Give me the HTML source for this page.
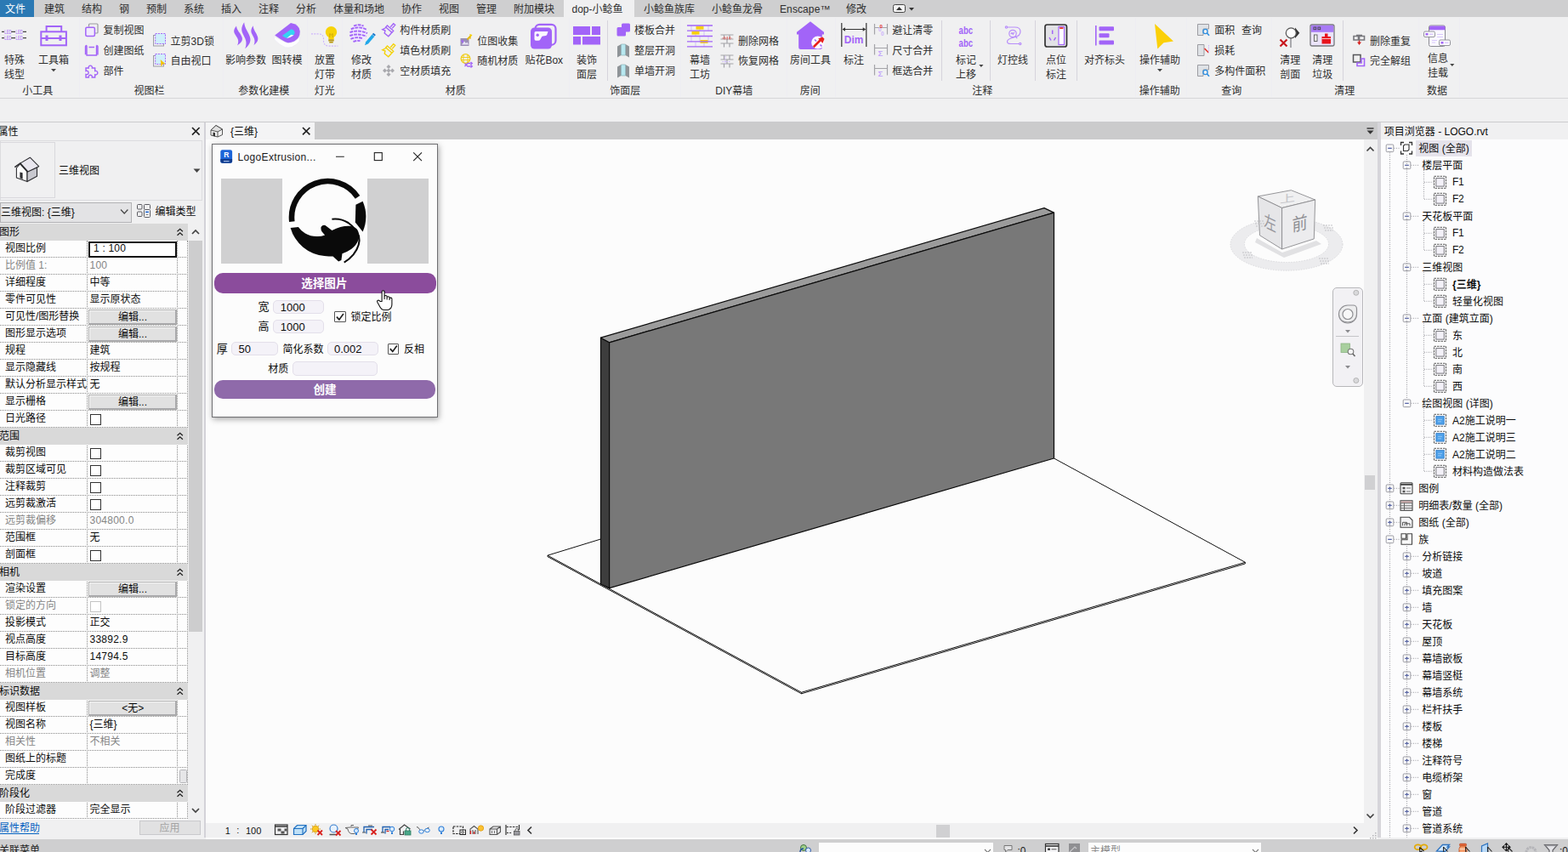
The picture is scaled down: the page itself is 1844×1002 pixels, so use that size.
<!DOCTYPE html>
<html lang="zh-CN"><head><meta charset="utf-8"><title>Revit - LOGO.rvt</title>
<style>
html,body{margin:0;padding:0}
body{width:1844px;height:1002px;overflow:hidden;position:relative;background:#fcfcfc;font-family:"Liberation Sans",sans-serif;font-size:12px;color:#333}
#app{position:absolute;left:0;top:0;width:1844px;height:1002px;overflow:hidden}
#app div,#app span{position:absolute;box-sizing:border-box}
.t{white-space:nowrap}
#ov{position:absolute;left:0;top:0}
</style></head>
<body>
<div id="app">
<div style="left:0px;top:0px;width:1844px;height:20px;background:#cfcfd0;"></div>
<div style="left:0px;top:0px;width:40px;height:19.5px;background:#2b79b4;"></div>
<div style="left:663px;top:0px;width:83px;height:20px;background:#f0f0f1;"></div>
<span class="t" style="top:2.9px;font-size:12px;line-height:16px;color:#2e2e2e;letter-spacing:0.1px;left:917px;">Enscape™</span>
<div style="left:0px;top:20px;width:1844px;height:95.5px;background:#f0f0f1;"></div>
<div style="left:0px;top:115px;width:1844px;height:1px;background:#d6d6d8;"></div>
<div style="left:0px;top:116px;width:1844px;height:26.5px;background:#f0f0f1;"></div>
<div style="left:0px;top:142.5px;width:1844px;height:1.5px;background:#cbcbcd;"></div>
<div style="left:713.7px;top:24px;width:1px;height:71px;background:#d6d4dc;"></div>
<div style="left:1107.1px;top:24px;width:1px;height:71px;background:#d6d4dc;"></div>
<div style="left:1164.2px;top:24px;width:1px;height:71px;background:#d6d4dc;"></div>
<div style="left:1217.2px;top:24px;width:1px;height:71px;background:#d6d4dc;"></div>
<div style="left:1265.9px;top:24px;width:1px;height:71px;background:#d6d4dc;"></div>
<div style="left:1579.1px;top:24px;width:1px;height:71px;background:#d6d4dc;"></div>
<div style="left:93px;top:21px;width:1px;height:93px;background:#eeedf2;"></div>
<div style="left:262px;top:21px;width:1px;height:93px;background:#eeedf2;"></div>
<div style="left:361px;top:21px;width:1px;height:93px;background:#eeedf2;"></div>
<div style="left:402px;top:21px;width:1px;height:93px;background:#eeedf2;"></div>
<div style="left:669px;top:21px;width:1px;height:93px;background:#eeedf2;"></div>
<div style="left:800px;top:21px;width:1px;height:93px;background:#eeedf2;"></div>
<div style="left:925px;top:21px;width:1px;height:93px;background:#eeedf2;"></div>
<div style="left:982px;top:21px;width:1px;height:93px;background:#eeedf2;"></div>
<div style="left:1335px;top:21px;width:1px;height:93px;background:#eeedf2;"></div>
<div style="left:1395px;top:21px;width:1px;height:93px;background:#eeedf2;"></div>
<div style="left:1495px;top:21px;width:1px;height:93px;background:#eeedf2;"></div>
<div style="left:1668px;top:21px;width:1px;height:93px;background:#eeedf2;"></div>
<div style="left:1716px;top:21px;width:1px;height:93px;background:#eeedf2;"></div>
<div style="left:0px;top:143.5px;width:239.5px;height:842px;background:#f0f0f1;"></div>
<div style="left:239.5px;top:143.5px;width:2.5px;height:842px;background:#d3d2d8;"></div>
<div style="left:0px;top:164.5px;width:238px;height:71px;background:#f0f0f1;border:1px solid #dcdcdf;"></div>
<div style="left:0px;top:167px;width:65px;height:65.5px;border:1px solid #d9d8dd;border-left:none;"></div>
<div style="left:0px;top:237.5px;width:154.5px;height:24px;background:#e3e3e5;border:1px solid #b2b2b5;"></div>
<div style="left:0px;top:263px;width:220.5px;height:700.5px;background:#fdfdfd;"></div>
<div style="left:102px;top:283px;width:1px;height:680px;border-left:1px dotted #8a8a8a;"></div>
<div style="left:208px;top:283px;width:1px;height:680px;border-left:1px dotted #8a8a8a;"></div>
<div style="left:220px;top:283px;width:1px;height:680px;border-left:1px dotted #8a8a8a;"></div>
<div style="left:0px;top:263px;width:220.5px;height:20px;background:#d9d9d9;"></div>
<div style="left:0px;top:283px;width:220.5px;height:20px;border-bottom:1px dotted #8a8a8a;"></div>
<div style="left:103.5px;top:283.5px;width:104.5px;height:19px;background:#fff;border:2px solid #111;"></div>
<span class="t" style="top:284.2px;font-size:12px;line-height:16px;color:#0c0c0c;letter-spacing:0.2px;left:110px;">1 : 100</span>
<div style="left:0px;top:303px;width:220.5px;height:20px;border-bottom:1px dotted #8a8a8a;"></div>
<span class="t" style="top:304.2px;font-size:12px;line-height:16px;color:#858585;letter-spacing:0.25px;left:105.5px;">100</span>
<div style="left:0px;top:323px;width:220.5px;height:20px;border-bottom:1px dotted #8a8a8a;"></div>
<div style="left:0px;top:343px;width:220.5px;height:20px;border-bottom:1px dotted #8a8a8a;"></div>
<div style="left:0px;top:363px;width:220.5px;height:20px;border-bottom:1px dotted #8a8a8a;"></div>
<div style="left:104px;top:364px;width:104px;height:18px;background:#e1e1e1;border:1px solid #adadad;box-shadow:inset -1px -1px 0 #a8a8ab, inset 1px 1px 0 #f6f6f6;"></div>
<div style="left:0px;top:383px;width:220.5px;height:20px;border-bottom:1px dotted #8a8a8a;"></div>
<div style="left:104px;top:384px;width:104px;height:18px;background:#e1e1e1;border:1px solid #adadad;box-shadow:inset -1px -1px 0 #a8a8ab, inset 1px 1px 0 #f6f6f6;"></div>
<div style="left:0px;top:403px;width:220.5px;height:20px;border-bottom:1px dotted #8a8a8a;"></div>
<div style="left:0px;top:423px;width:220.5px;height:20px;border-bottom:1px dotted #8a8a8a;"></div>
<div style="left:0px;top:443px;width:220.5px;height:20px;border-bottom:1px dotted #8a8a8a;"></div>
<div style="left:0px;top:463px;width:220.5px;height:20px;border-bottom:1px dotted #8a8a8a;"></div>
<div style="left:104px;top:464px;width:104px;height:18px;background:#e1e1e1;border:1px solid #adadad;box-shadow:inset -1px -1px 0 #a8a8ab, inset 1px 1px 0 #f6f6f6;"></div>
<div style="left:0px;top:483px;width:220.5px;height:20px;border-bottom:1px dotted #8a8a8a;"></div>
<div style="left:106px;top:486.5px;width:13px;height:13px;background:#fff;border:1px solid #333;"></div>
<div style="left:0px;top:503px;width:220.5px;height:20px;background:#d9d9d9;"></div>
<div style="left:0px;top:523px;width:220.5px;height:20px;border-bottom:1px dotted #8a8a8a;"></div>
<div style="left:106px;top:526.5px;width:13px;height:13px;background:#fff;border:1px solid #333;"></div>
<div style="left:0px;top:543px;width:220.5px;height:20px;border-bottom:1px dotted #8a8a8a;"></div>
<div style="left:106px;top:546.5px;width:13px;height:13px;background:#fff;border:1px solid #333;"></div>
<div style="left:0px;top:563px;width:220.5px;height:20px;border-bottom:1px dotted #8a8a8a;"></div>
<div style="left:106px;top:566.5px;width:13px;height:13px;background:#fff;border:1px solid #333;"></div>
<div style="left:0px;top:583px;width:220.5px;height:20px;border-bottom:1px dotted #8a8a8a;"></div>
<div style="left:106px;top:586.5px;width:13px;height:13px;background:#fff;border:1px solid #333;"></div>
<div style="left:0px;top:603px;width:220.5px;height:20px;border-bottom:1px dotted #8a8a8a;"></div>
<span class="t" style="top:604.2px;font-size:12px;line-height:16px;color:#858585;letter-spacing:0.25px;left:105.5px;">304800.0</span>
<div style="left:0px;top:623px;width:220.5px;height:20px;border-bottom:1px dotted #8a8a8a;"></div>
<div style="left:0px;top:643px;width:220.5px;height:20px;border-bottom:1px dotted #8a8a8a;"></div>
<div style="left:106px;top:646.5px;width:13px;height:13px;background:#fff;border:1px solid #333;"></div>
<div style="left:0px;top:663px;width:220.5px;height:20px;background:#d9d9d9;"></div>
<div style="left:0px;top:683px;width:220.5px;height:20px;border-bottom:1px dotted #8a8a8a;"></div>
<div style="left:104px;top:684px;width:104px;height:18px;background:#e1e1e1;border:1px solid #adadad;box-shadow:inset -1px -1px 0 #a8a8ab, inset 1px 1px 0 #f6f6f6;"></div>
<div style="left:0px;top:703px;width:220.5px;height:20px;border-bottom:1px dotted #8a8a8a;"></div>
<div style="left:106px;top:706.5px;width:13px;height:13px;background:#fff;border:1px solid #c4c4c4;"></div>
<div style="left:0px;top:723px;width:220.5px;height:20px;border-bottom:1px dotted #8a8a8a;"></div>
<div style="left:0px;top:743px;width:220.5px;height:20px;border-bottom:1px dotted #8a8a8a;"></div>
<span class="t" style="top:744.2px;font-size:12px;line-height:16px;color:#0c0c0c;letter-spacing:0.25px;left:105.5px;">33892.9</span>
<div style="left:0px;top:763px;width:220.5px;height:20px;border-bottom:1px dotted #8a8a8a;"></div>
<span class="t" style="top:764.2px;font-size:12px;line-height:16px;color:#0c0c0c;letter-spacing:0.25px;left:105.5px;">14794.5</span>
<div style="left:0px;top:783px;width:220.5px;height:20px;border-bottom:1px dotted #8a8a8a;"></div>
<div style="left:0px;top:803px;width:220.5px;height:20px;background:#d9d9d9;"></div>
<div style="left:0px;top:823px;width:220.5px;height:20px;border-bottom:1px dotted #8a8a8a;"></div>
<div style="left:104px;top:824px;width:104px;height:18px;background:#e1e1e1;border:1px solid #adadad;box-shadow:inset -1px -1px 0 #a8a8ab, inset 1px 1px 0 #f6f6f6;"></div>
<div style="left:0px;top:843px;width:220.5px;height:20px;border-bottom:1px dotted #8a8a8a;"></div>
<div style="left:0px;top:863px;width:220.5px;height:20px;border-bottom:1px dotted #8a8a8a;"></div>
<div style="left:0px;top:883px;width:220.5px;height:20px;border-bottom:1px dotted #8a8a8a;"></div>
<div style="left:0px;top:903px;width:220.5px;height:20px;border-bottom:1px dotted #8a8a8a;"></div>
<div style="left:0px;top:923px;width:220.5px;height:20px;background:#d9d9d9;"></div>
<div style="left:0px;top:943px;width:220.5px;height:20px;border-bottom:1px dotted #8a8a8a;"></div>
<div style="left:210.5px;top:905px;width:9.5px;height:16px;background:#e6e6e8;border:1px solid #b5b5b8;border-radius:1.5px;"></div>
<div style="left:222px;top:263px;width:15.5px;height:700px;background:#f0f0f1;"></div>
<div style="left:222px;top:283px;width:15.5px;height:460px;background:#cdcdce;"></div>
<div style="left:0px;top:980px;width:46px;height:1px;background:#0563c1;"></div>
<div style="left:163.5px;top:964.5px;width:72px;height:17.5px;background:#e1e1e2;border:1px solid #c9c9cc;"></div>
<div style="left:242px;top:143.5px;width:1382px;height:20.5px;background:#cbcbcc;"></div>
<div style="left:242.3px;top:143.5px;width:127.5px;height:20.5px;background:#f4f4f5;"></div>
<div style="left:242px;top:164px;width:1362px;height:804px;background:#fcfcfc;"></div>
<div style="left:1604px;top:164px;width:16px;height:804px;background:#f0f0f1;"></div>
<div style="left:1605px;top:559px;width:12px;height:17px;background:#d0d0d2;"></div>
<div style="left:1620px;top:143.5px;width:4.3px;height:842px;background:#d6d5da;"></div>
<div style="left:249px;top:169px;width:266px;height:322px;background:#fcfcfc;border:1px solid #6f6f72;box-shadow:1px 2px 7px rgba(0,0,0,.35);"></div>
<span class="t" style="top:177.4px;font-size:12px;line-height:16px;color:#1a1a1a;letter-spacing:0.33px;left:279.6px;">LogoExtrusion...</span>
<div style="left:260.2px;top:210.2px;width:72px;height:99.6px;background:#d0d0d1;"></div>
<div style="left:432px;top:210.2px;width:72px;height:99.6px;background:#d0d0d1;"></div>
<div style="left:251.5px;top:321.2px;width:261.5px;height:23.7px;background:#8b4c9c;border-radius:10px;"></div>
<div style="left:252px;top:447.3px;width:260px;height:21.5px;background:#8f6aaa;border-radius:10px;"></div>
<div style="left:321.2px;top:352.6px;width:59.7px;height:16.4px;background:#f4f2f8;border:1px solid #e3dfea;border-radius:5px;"></div>
<span class="t" style="top:352.7px;font-size:13px;line-height:17px;color:#0c0c0c;left:329.8px;">1000</span>
<div style="left:321.2px;top:375.6px;width:59.7px;height:16.4px;background:#f4f2f8;border:1px solid #e3dfea;border-radius:5px;"></div>
<span class="t" style="top:375.7px;font-size:13px;line-height:17px;color:#0c0c0c;left:329.8px;">1000</span>
<div style="left:272.4px;top:401.8px;width:54.2px;height:16.6px;background:#f4f2f8;border:1px solid #e3dfea;border-radius:5px;"></div>
<span class="t" style="top:402.4px;font-size:13px;line-height:17px;color:#0c0c0c;left:280.5px;">50</span>
<div style="left:385.3px;top:401.8px;width:59.3px;height:16.6px;background:#f4f2f8;border:1px solid #e3dfea;border-radius:5px;"></div>
<span class="t" style="top:402.4px;font-size:13px;line-height:17px;color:#0c0c0c;left:393px;">0.002</span>
<div style="left:344.2px;top:425.4px;width:99.7px;height:16.5px;background:#f4f2f8;border:1px solid #e3dfea;border-radius:5px;"></div>
<div style="left:393.3px;top:366.3px;width:13.3px;height:12.8px;background:#fff;border:1px solid #555;border-radius:1px;"></div>
<div style="left:456.2px;top:403.8px;width:13.3px;height:12.8px;background:#fff;border:1px solid #555;border-radius:1px;"></div>
<div style="left:1567px;top:338px;width:35.5px;height:117px;background:#f2f1f4;border:1.500px solid #b7b7ba;border-radius:5px;"></div>
<div style="left:1624.3px;top:143.5px;width:220px;height:842px;background:#fcfcfd;"></div>
<div style="left:1624.3px;top:144px;width:220px;height:20px;background:#f0f0f1;"></div>
<div style="left:1665px;top:164.5px;width:65.5px;height:19.5px;background:#e5e3eb;"></div>
<span class="t" style="top:206.3px;font-size:12px;line-height:16px;color:#0c0c0c;letter-spacing:-0.3px;left:1708px;">F1</span>
<span class="t" style="top:226.3px;font-size:12px;line-height:16px;color:#0c0c0c;letter-spacing:-0.3px;left:1708px;">F2</span>
<span class="t" style="top:266.3px;font-size:12px;line-height:16px;color:#0c0c0c;letter-spacing:-0.3px;left:1708px;">F1</span>
<span class="t" style="top:286.3px;font-size:12px;line-height:16px;color:#0c0c0c;letter-spacing:-0.3px;left:1708px;">F2</span>
<div style="left:242px;top:968px;width:1378px;height:17.5px;background:#f0f0f1;"></div>
<span class="t" style="top:969.5px;font-size:11px;line-height:15px;color:#111;left:264.8px;">1</span>
<span class="t" style="top:969.1px;font-size:11px;line-height:15px;color:#111;left:278.2px;">:</span>
<span class="t" style="top:969.5px;font-size:11px;line-height:15px;color:#111;left:289px;">100</span>
<div style="left:1100.5px;top:969.5px;width:16.5px;height:15px;background:#d0d0d2;"></div>
<div style="left:242px;top:985.3px;width:1378px;height:2px;background:#fcfcfc;"></div>
<div style="left:0px;top:985px;width:242px;height:2.5px;background:#f0f0f1;"></div>
<div style="left:1620px;top:984.5px;width:224px;height:3px;background:#f0f0f1;"></div>
<div style="left:0px;top:987.2px;width:1844px;height:15px;background:#cfcfd0;"></div>
<div style="left:962.5px;top:991px;width:205px;height:12px;background:#fcfcfc;"></div>
<div style="left:1279.5px;top:991px;width:203.5px;height:12px;background:#fcfcfc;"></div>
<span class="t" style="top:993.3px;font-size:12px;line-height:16px;color:#222;left:1196.5px;">:0</span>
<div style="left:1256.5px;top:992px;width:13.5px;height:10px;background:#8f8f92;"></div>
<span class="t" style="top:993.3px;font-size:12px;line-height:16px;color:#222;left:1834px;">:0</span>
</div>
<svg id="ov" width="1844" height="1002" viewBox="0 0 1844 1002">
<g id="icons">
<rect x="1050.5" y="5.5" width="14" height="9" rx="2" fill="#f4f4f4" stroke="#444"/><path d="M1054 12l3.5-4 3.5 4z" fill="#333"/><path d="M1069 9h6l-3 3.5z" fill="#333"/>
<path d="M60 81l3 3.2 3-3.2z" fill="#444"/>
<path d="M1151.3 76l2.6 3 2.6-3z" fill="#444"/>
<path d="M1361 81l3 3.2 3-3.2z" fill="#444"/>
<path d="M1705.2 75l2.6 3 2.6-3z" fill="#444"/>
<g font-family="Liberation Sans, sans-serif"><path d="M2 37.4 h3 M13 37.4 h5 M27 37.4 h4" stroke="#444" stroke-width="1.3"/><text x="5.3" y="39.6" font-size="6.8" fill="#a264f8" textLength="8.4" lengthAdjust="spacingAndGlyphs">LED</text><text x="18.6" y="39.6" font-size="6.8" fill="#a264f8" textLength="8.4" lengthAdjust="spacingAndGlyphs">LED</text><path d="M2 44.7 h3 M13 44.7 h5 M27 44.7 h4" stroke="#444" stroke-width="1.3"/><text x="5.3" y="46.900000000000006" font-size="6.8" fill="#a264f8" textLength="8.4" lengthAdjust="spacingAndGlyphs">LED</text><text x="18.6" y="46.900000000000006" font-size="6.8" fill="#a264f8" textLength="8.4" lengthAdjust="spacingAndGlyphs">LED</text><g fill="none" stroke="#a264f8" stroke-width="2"><rect x="48.3" y="37.3" width="29.6" height="16"/><path d="M54.6 37v-6h17.6v6M48.3 45h29.6"/></g><rect x="53.5" y="41.5" width="3" height="6.5" fill="#a264f8"/><rect x="69.5" y="41.5" width="3" height="6.5" fill="#a264f8"/><path d="M104.5 31.5v-2.5a1 1 0 0 1 1-1h8.5a1 1 0 0 1 1 1v9a1 1 0 0 1-1 1h-2" fill="none" stroke="#9a9aa0" stroke-width="1.2"/><rect x="100.8" y="32.2" width="10.6" height="10.4" rx="1.5" fill="#f1eafd" stroke="#a264f8" stroke-width="1.5"/><path d="M102 53.5v11.5h11.5v-11.5M102 53.5a1.3 1.3 0 0 0-1.5 1.2v9.5M113.5 53.5a1.3 1.3 0 0 1 1.5 1.2v9.8M104.5 55.5h6.5" fill="none" stroke="#a264f8" stroke-width="1.4"/><path d="M101 80h3.2a2.2 2.2 0 1 1 4.2 0h3.3v3.5a2.3 2.3 0 1 1 0 4.3v3.2h-3.4a2.1 2.1 0 1 0-4 0h-3.3v-3.5a2.2 2.2 0 1 0 0-4z" fill="none" stroke="#a264f8" stroke-width="1.4"/><rect x="180.5" y="41.5" width="12" height="12.5" fill="none" stroke="#9c9ca4"/><rect x="182.7" y="39.5" width="11.8" height="12" fill="#cfeffa" stroke="#a264f8" stroke-dasharray="2 1.2"/><rect x="180.5" y="65.5" width="12" height="12.5" fill="none" stroke="#9c9ca4"/><rect x="182.7" y="63.5" width="11.8" height="12" fill="#cfeffa" stroke="#a264f8" stroke-dasharray="2 1.2"/><path d="M188.7 70 l5.8 5.2-3.2 0.4-1.8 2.8z" fill="#f5c400"/><path transform="translate(274.5 30.5) scale(1.0 1.0)" d="M3.500 0C1 3-.5 6 2 10C4.500 14 7.500 17 4.500 23C9 20 11.500 17 10 13C8.500 8.500 4 5.500 3.500 0z" fill="#a264f8"/><path transform="translate(283.5 26.3) scale(1.05 1.35)" d="M3.500 0C1 3-.5 6 2 10C4.500 14 7.500 17 4.500 23C9 20 11.500 17 10 13C8.500 8.500 4 5.500 3.500 0z" fill="#a264f8"/><path transform="translate(294.8 30.2) scale(0.82 1.0)" d="M3.500 0C1 3-.5 6 2 10C4.500 14 7.500 17 4.500 23C9 20 11.500 17 10 13C8.500 8.500 4 5.500 3.500 0z" fill="#a264f8"/><path d="M322.100 42.500L322.800 46.500Q328 52.500 335.400 55.700Q340 56.500 343.500 55.200Q349 53 352 48.500L352.800 40Q352 46 346 48.800Q342 50.800 338.300 50.600Q332 48.500 322.100 42.500z" fill="#fdfdfe" stroke="#e6e3ee" stroke-width=".5"/><path d="M323.200 41.400L342 27.100Q352 28.500 352.800 37Q352.800 45 346 48.500Q342 50.500 338.500 50.300Q333 48.500 323.200 41.400z" fill="#a264f8"/><path d="M331.800 41.900L342.500 34.300Q346.800 35.500 346.600 38.900Q345.500 42.500 336.900 45z" fill="#35d4f2"/><path d="M337 45L342.500 40.800L345.500 41.500Q342 44 337 45z" fill="#fdfdfe"/><path d="M366 39.900h9q5 0 5.500 5.500v3q.5 5.500 6 5.700h11" fill="none" stroke="#cdb4fb" stroke-width="1.100" stroke-dasharray="2 1.300"/><circle cx="389.500" cy="37.800" r="6.700" fill="#f7d308"/><path d="M386.300 42h6.400v4h-6.400z" fill="#f7d308"/><path d="M386.300 46.300h6.400v2.200h-6.400zM387.300 49h4.400v1.500h-4.400z" fill="#b8960c"/><path d="M387.800 44v-4.500l1.700 1.600 1.700-1.600v4.500" stroke="#c9a708" fill="none" stroke-width=".9"/><circle cx="421.500" cy="39.600" r="10.300" fill="#efe7fd"/><g stroke="#a264f8" stroke-width="1.900" stroke-dasharray="3.800 1.100" fill="none"><path d="M416 30.500q5.500-2.500 11.500 0M412.800 34.300q9-4 18 .3M411.500 38.200q10-4 20.500 1M411.300 42q10-3.500 19.500 .8M412.500 45.800q7-3 14-.5M415.500 49q4.500-1.800 8-.8"/></g><path d="M429 53.200l1.200-4 7.300-8.700 2.800 2.400-7.300 8.600z" fill="#22a8ea"/><path d="M437.800 40.200l1.300-1.500 2.800 2.400-1.300 1.500z" fill="#1673c9"/><g transform="translate(449 26.5)" fill="none" stroke="#a264f8" stroke-width="1.400"><path d="M10.200 5.200l3.500-4 2 1.700-3.500 4M6.500 3.500l7.200 6.200-1.800 2-7.200-6.200zM5 6l-4.200 2.200 3.200 1.300-0.800 3 4.600 3.800 4-4.500"/></g><g transform="translate(449 50.5)" fill="none" stroke="#f3d20a" stroke-width="1.400"><path d="M10.200 5.200l3.500-4 2 1.700-3.500 4M6.500 3.500l7.200 6.200-1.800 2-7.200-6.200zM5 6l-4.200 2.200 3.200 1.300-0.800 3 4.600 3.800 4-4.500"/></g><g fill="#a9a9ae"><path d="M457 76l2.500 2.500-2.500 2.500-2.500-2.500zM452.500 80.500l2.500 2.500-2.500 2.500-2.500-2.500zM461.500 80.500l2.500 2.500-2.500 2.500-2.500-2.500zM457 85l2.500 2.500-2.500 2.500-2.500-2.500zM457 80.500l2.500 2.500-2.500 2.500-2.500-2.500z"/></g><rect x="541.500" y="45" width="10" height="9" fill="#9b8fb5"/><path d="M543 52.500l3-4 2 2.500 1.500-1.500 1.500 3z" fill="#e9e4f6"/><path d="M541.500 47.500l3.500 3.500v-3.500z" fill="#a264f8"/><path d="M549 45.500l5-5.200-0.500 5.700-2-1-1 2.500z" fill="#e5b800"/><path d="M552 40l3.500 1-1.800 2.500z" fill="#f5d000"/><circle cx="547.500" cy="69" r="5.300" fill="none" stroke="#f0cb10" stroke-width="1.300"/><path d="M542.500 67.500h10M542.500 70.500h10M545.500 64.500q-1.500 4.500 0 9M549.500 64.500q1.500 4.500 0 9" stroke="#f0cb10" fill="none" stroke-width=".9"/><path d="M546.500 78l3.500-3.500h3.500M546.500 74.500l3.500 3.500h3.500M553.500 73l1.800 1.500-1.800 1.500M553.500 76.500l1.800 1.500-1.800 1.500" stroke="#a264f8" stroke-width="1.300" fill="none"/><rect x="629.500" y="28.800" width="24" height="24" rx="5" fill="none" stroke="#a264f8" stroke-width="2.200"/><rect x="624" y="32.500" width="25" height="25" rx="4.500" fill="#a264f8"/><path d="M628.500 38.500q0-1.500 1.500-1.500h14.500l-1.200 3.800q-0.300 1-1.500 1.200l-3.300 0.500q-1 0.200-1.500 1l-1.500 2.800q-0.800 1.500-2.500 1.500h-2.800q-1.700 0-1.700-1.700z" fill="#fbf8ff"/><circle cx="632.200" cy="41.300" r="1.700" fill="#a264f8"/><g fill="#a264f8"><rect x="674" y="31" width="20" height="10"/><rect x="696" y="31" width="10" height="10"/><rect x="674" y="43" width="9" height="9.500"/><rect x="685" y="43" width="21" height="9.500"/></g><path d="M732.500 27.500h7q1.500 0 1.500 1.500v7q0 1.500-1.500 1.500h-3.500v3.500q0 1.500-1.500 1.500h-7.500q-1.500 0-1.500-1.500v-7.500q0-1.500 1.500-1.500h4v-3q0-1.500 1.500-1.500z" fill="#a264f8"/><path d="M726 54.5 l4.500-2.500v13l-4.500 2.500zM735.500 52 l4.500 2.500v13l-4.500-2.500z" fill="#8f9498"/><path d="M730.500 52 h5v13h-5z" fill="#b8e8f0" stroke="#7fa8b0" stroke-width=".6"/><path d="M726 78.5 l4.500-2.500v13l-4.500 2.500zM735.500 76 l4.500 2.500v13l-4.500-2.500z" fill="#8f9498"/><path d="M730.500 76 h5v13h-5z" fill="#b8e8f0" stroke="#7fa8b0" stroke-width=".6"/><g stroke="#d9c8fb" stroke-width="1.300"><path d="M813 30v6.500M823 30v6.500M833 30v6.500M818 36.500v6.500M828 36.500v6.500M813 43v6.500M823 43v6.500M833 43v6.500M818 49.500v5.500M828 49.500v5.500"/></g><g fill="#f9cf0a"><rect x="818.500" y="30.800" width="9" height="3.800"/><rect x="813.500" y="36.800" width="9" height="3.800"/><rect x="823.500" y="47" width="9" height="3.800"/></g><path d="M808 30h30M808 36.200h30M808 42.500h30M808 48.800h30M808 54.800h30" stroke="#a264f8" stroke-width="1.300"/><g stroke="#a3a3a8" stroke-width="1.200" fill="none"><path d="M847.500 41 h15M847.500 46 h15M847.500 51 h15M851.500 41.500 v4.500M858 41.500 v4.500M855 46 v5M851.500 51 v4.500M858 51 v4.500"/></g><path d="M849.500 45 h11M852 43 v3.500M855.200 43 v3.500M858.400 43 v3.500" stroke="#e0554f" stroke-width="1" stroke-dasharray="1.500 1"/><g stroke="#a3a3a8" stroke-width="1.200" fill="none"><path d="M847.500 65 h15M847.500 70 h15M847.500 75 h15M851.500 65.500 v4.500M858 65.500 v4.500M855 70 v5M851.500 75 v4.500M858 75 v4.500"/></g><path d="M849.500 72.500 h10M853 66 v9" stroke="#c9b5f5" stroke-width="1" stroke-dasharray="1.500 1"/><path d="M953 25.300l16 12.500v2.700h-2.200v15q0 2.500-2.500 2.500h-22.600q-2.500 0-2.500-2.500v-15h-2.200v-2.700z" fill="#a264f8"/><circle cx="961.800" cy="50" r="7.600" fill="#fbf8ff"/><path d="M957.500 54.500l6.500-6.500M964.500 46l2.500-1 1 1-1 2.500z" stroke="#e8211c" stroke-width="2.600" stroke-linecap="round" fill="#e8211c"/><path d="M958 46.500l2 2M964.500 52.500l2 2" stroke="#a264f8" stroke-width="1.600"/><path d="M989.800 27v28M1018.800 27v28M991 34.500h26.500" stroke="#333" stroke-width="1.200" fill="none"/><path d="M990.500 34.500l3.500-2.200v4.400zM1018.200 34.500l-3.500-2.200v4.400z" fill="#333"/><text x="992.800" y="50.500" font-size="12.500" font-weight="bold" fill="#a264f8" textLength="22.500" lengthAdjust="spacingAndGlyphs">Dim</text><path d="M1028.500 28 v12.500M1043.500 28 v12.500M1029 32.500 h14" stroke="#a3a3a8" stroke-width="1.200" fill="none"/><text x="1033" y="37" font-size="6.500" font-weight="bold" fill="#cdb4fb">0</text><text x="1036" y="42" font-size="6.500" font-weight="bold" fill="#cdb4fb">0</text><text x="1034.500" y="32.500" font-size="6" font-weight="bold" fill="#e0332c">0</text><path d="M1028.500 52 v12.500M1043.500 52 v12.500M1029 56.500 h14" stroke="#a3a3a8" stroke-width="1.200" fill="none"/><text x="1032.500" y="65.500" font-size="9.500" font-weight="bold" fill="#c4a6fb">Σ</text><path d="M1028.500 76 v12.500M1043.500 76 v12.500M1029 80.500 h14" stroke="#a3a3a8" stroke-width="1.200" fill="none"/><text x="1032.500" y="89.500" font-size="9.500" font-weight="bold" fill="#c4a6fb">Σ</text><text x="1127.600" y="40.300" font-size="12.500" font-weight="bold" fill="#a264f8" textLength="16.500" lengthAdjust="spacingAndGlyphs">abc</text><text x="1127.600" y="54.500" font-size="12.500" font-weight="bold" fill="#a264f8" textLength="16.500" lengthAdjust="spacingAndGlyphs">abc</text><g fill="none" stroke="#b88dfa" stroke-width="1.200"><path d="M1184.500 32h9q6.500 0 6.500 5t-6 6.500l-5 1.500q-4.500 1.500-4.500 4t4 2.500h10"/><circle cx="1191" cy="39.500" r="4.200"/><path d="M1188.800 40l1.300-1.500 1.200 1.800 1.500-2.500M1194 42.500l2.200 2.500"/><circle cx="1183.500" cy="32" r="1.200"/><circle cx="1199.700" cy="51.500" r="1.200"/></g><rect x="1229" y="29" width="25.500" height="26" rx="2.500" fill="#e2e2e6" stroke="#333" stroke-width="1.700"/><rect x="1245" y="31.500" width="6.500" height="21" fill="#fff" stroke="#a264f8" stroke-width="1.200"/><rect x="1246.200" y="32.200" width="4.200" height="1.800" fill="#e8332c"/><path d="M1237.700 35.500v4.500M1234 44l2 3.500M1241.500 44l-2 3.500" stroke="#a264f8" stroke-width="1.500" fill="none"/><path d="M1288.800 30v23.500" stroke="#a264f8" stroke-width="1.600"/><g fill="#a264f8"><rect x="1292.500" y="31.200" width="17.500" height="5" rx="1"/><rect x="1292.500" y="39.300" width="12" height="5" rx="1"/><rect x="1292.500" y="47.500" width="17.500" height="5" rx="1"/></g><path d="M1358 28l22 20.500-11.500 1.800-7.200 7.200z" fill="#fbd008"/><path d="M1408.500 28.500 h13v5.500h-6.500v7.500h-6.500z" fill="#dfe2e6" stroke="#9c9ca2" stroke-width="1"/><circle cx="1417.500" cy="37" r="2.600" fill="none" stroke="#2f8fe0" stroke-width="1.300"/><path d="M1419.500 39 l2.500 2.800" stroke="#2f8fe0" stroke-width="1.600"/><path d="M1408.500 52.500 h7.500v13h-7.500z" fill="#dfe2e6" stroke="#9c9ca2" stroke-width="1"/><path d="M1416.500 57 l5 5" stroke="#e0332c" stroke-width="1.600"/><path d="M1421.500 53 v9" stroke="#cdb4fb" stroke-dasharray="1.500 1.200"/><path d="M1408.500 76.500 h13v5.500h-6.500v7.500h-6.500z" fill="#dfe2e6" stroke="#9c9ca2" stroke-width="1"/><circle cx="1417.500" cy="85" r="2.600" fill="none" stroke="#2f8fe0" stroke-width="1.300"/><path d="M1419.500 87 l2.500 2.800" stroke="#2f8fe0" stroke-width="1.600"/><path d="M1518 45v11" stroke="#8a8a90" stroke-width="1.400"/><path d="M1523 32.500l5.300 6.300-5.300 6.300z" fill="#333"/><circle cx="1518.300" cy="38.800" r="6" fill="#fdfdfd" stroke="#555" stroke-width="1.200"/><path d="M1505.500 46.500l8 8M1513.500 46.500l-8 8" stroke="#c8161d" stroke-width="2.200"/><rect x="1541" y="29" width="28" height="25" rx="2" fill="#ebe4fb" stroke="#77777c" stroke-width="1.300"/><path d="M1541.800 29.800h26.400v8h-26.400z" fill="#a87af6"/><rect x="1545" y="32" width="2.700" height="2.700" fill="none" stroke="#444" stroke-width=".9"/><rect x="1550" y="32" width="2.700" height="2.700" fill="none" stroke="#444" stroke-width=".9"/><rect x="1545.500" y="41" width="3.500" height="7.500" fill="#fdfdfd" stroke="#555" stroke-width=".9"/><path d="M1558 39.500h3.500v3.500h3.500v8.500h-10.500v-8.500h3.500z" fill="#e8141c"/><path d="M1554.500 45.500h10.500" stroke="#fbe9e9" stroke-width=".8"/><path d="M1592 42.500h5.500v4.500h-5.500zM1598.500 42.500h6v4.500h-6z" fill="none" stroke="#77777c" stroke-width="1.600"/><path d="M1595 41.500h7" stroke="#77777c" stroke-width="1.600"/><path d="M1596 49.500h5l-2.500 3.500z" fill="#d8221f"/><path d="M1598.500 47.500v3" stroke="#d8221f" stroke-width="1.400"/><path d="M1591.500 64.500h8.500v8.500h-8.500z" fill="none" stroke="#55555a" stroke-width="1.500"/><path d="M1604.500 69v8.500h-8.500v-3.500h5v-5z" fill="none" stroke="#a264f8" stroke-width="1.600"/><rect x="1680.500" y="30" width="19" height="24.500" rx="2" fill="#faf8ff" stroke="#8a8a92" stroke-width="1"/><path d="M1681 32q0-1.500 1.500-1.500h15.500q1.500 0 1.500 1.500v3.300h-18.500z" fill="#a264f8"/><path d="M1690 40.500h7M1690 43.500h7M1684 47.500h6M1684 50h4" stroke="#d9c8fb" stroke-width="1"/><rect x="1674.500" y="37" width="13" height="6.500" rx="1.500" fill="#fbfaff" stroke="#8a8a92" stroke-width=".9"/><rect x="1676.500" y="39" width="3" height="2.500" fill="#a264f8"/><path d="M1681 40.200h4.500" stroke="#cdb4fb" stroke-width="1"/><rect x="1692.500" y="47" width="13" height="6.500" rx="1.500" fill="#fbfaff" stroke="#8a8a92" stroke-width=".9"/><rect x="1694.500" y="49" width="3" height="2.500" fill="#a264f8"/><path d="M1699 50.200h4.500" stroke="#cdb4fb" stroke-width="1"/></g>
<path d="M226 150l8.600 8.600M234.600 150l-8.600 8.600" stroke="#222" stroke-width="1.700"/>
<path d="M227.500 198.500h8l-4 4.500z" fill="#444"/>
<g stroke="#2e2e32" stroke-width="1.100" stroke-linejoin="round"><path d="M19.400 197.500L23.700 192.600L32 201.800L32 213.600L19.400 209z" fill="#fdfdfd"/><path d="M32 201.800L43.500 197V207.200L32 213.600z" fill="#c8c8cf"/><path d="M23.700 192.100L35.300 185.200L45.700 195.700L32.700 202.100z" fill="#e9e7ef"/><path d="M17.300 196.700L23.700 192.100L32.700 202.100" fill="none" stroke-width="1.600"/><path d="M23.400 202.500L26.600 203.200V210.800L23.400 209.300z" fill="#2e2e32" stroke="none"/></g>
<path d="M142 246.500l4.200 4.500 4.200-4.500" fill="none" stroke="#444" stroke-width="1.200"/>
<g fill="none" stroke="#5a5a60" stroke-width="1"><rect x="161.500" y="240.500" width="5.500" height="5.500" rx="1"/><rect x="161.500" y="249" width="5.500" height="5.500" rx="1"/><path d="M169.500 246v-4.500q0-1 1-1h5q1 0 1 1v4"/><rect x="169.500" y="246.500" width="7" height="9" rx="1" fill="#fff"/></g><rect x="171" y="248.500" width="4" height="1.800" fill="#2f6fd0"/><path d="M171.500 252.500h3" stroke="#555" stroke-width=".8"/>
<path d="M208.500 272.300 l3.200-3 3.200 3M208.500 276.800 l3.200-3 3.200 3" fill="none" stroke="#222" stroke-width="1.300"/>
<path d="M208.500 512.300 l3.200-3 3.200 3M208.500 516.800 l3.200-3 3.200 3" fill="none" stroke="#222" stroke-width="1.300"/>
<path d="M208.500 672.300 l3.200-3 3.200 3M208.500 676.800 l3.200-3 3.200 3" fill="none" stroke="#222" stroke-width="1.300"/>
<path d="M208.500 812.300 l3.200-3 3.200 3M208.500 816.800 l3.200-3 3.200 3" fill="none" stroke="#222" stroke-width="1.300"/>
<path d="M208.500 932.300 l3.200-3 3.200 3M208.500 936.800 l3.200-3 3.200 3" fill="none" stroke="#222" stroke-width="1.300"/>
<path d="M226 275l4-4 4 4" fill="none" stroke="#444" stroke-width="1.700"/><path d="M226 951l4 4 4-4" fill="none" stroke="#444" stroke-width="1.700"/>
<g transform="translate(247.500 146.500)"><path d="M.5 6.500l6-5.500 7.500 4.500v6.500l-5.500 2.500-8-2z" fill="#f1f1f1" stroke="#444" stroke-width=".9"/><path d="M6.500 1l7.500 4.500-5.500 3-8-2z" fill="#e0e0e0" stroke="#444" stroke-width=".9"/><path d="M8.500 8.500v6" stroke="#444" stroke-width=".9"/><path d="M3 9l2.500 .7v4.300l-2.500-.7z" fill="#333"/></g>
<path d="M356 150l8.400 8.400M364.400 150l-8.400 8.400" stroke="#222" stroke-width="1.700"/>
<path d="M1607.500 151h8" stroke="#333" stroke-width="1.400"/><path d="M1607.500 153.500h8l-4 4.200z" fill="#333"/>
<path d="M1607.500 177.500l4-4 4 4M1607.500 957.500l4 4 4-4" fill="none" stroke="#444" stroke-width="1.700"/>
<g stroke-linejoin="round">
<path d="M706.500 634L644 653.200L942.500 814.300L1464.400 661.300L1239.500 539" fill="none" stroke="#111" stroke-width="1"/>
<path d="M644 654.600L942.500 815.800L1464.400 662.900" fill="none" stroke="#111" stroke-width="1"/>
<path d="M644 653.200v1.500M942.500 814.300v1.500M1464.400 661.300v1.600" stroke="#111" stroke-width="1"/>
<path d="M706.500 397.200L716.600 402.800L716.600 691.600L706.500 687z" fill="#3d3d3d" stroke="#0a0a0a" stroke-width="1.200"/>
<path d="M706.500 397.200L1228 244.600L1239.500 250.100L716.600 402.800z" fill="#9b9b9b" stroke="#0a0a0a" stroke-width="1.200"/>
<path d="M716.600 402.800L1239.500 250.100L1239.500 539L716.600 691.600z" fill="#787878" stroke="#0a0a0a" stroke-width="1.200"/>
</g>
<rect x="259.300" y="176.200" width="13.800" height="15.600" rx="2.200" fill="#1c64d8"/><path d="M259.300 187h13.800v2.600a2.200 2.200 0 0 1-2.200 2.200h-9.400a2.200 2.200 0 0 1-2.200-2.200z" fill="#123c8c"/><text x="263.200" y="185.200" font-family="Liberation Sans, sans-serif" font-size="8.500" font-weight="bold" fill="#fff">R</text><path d="M263 189.600h6.500" stroke="#9db8e8" stroke-width="1.200"/>
<path d="M395 184.300h9.800M486.200 179.300l9.800 9.800M496 179.300l-9.800 9.800" stroke="#222" stroke-width="1.100" fill="none"/><rect x="440.300" y="179.600" width="9" height="9" fill="none" stroke="#222" stroke-width="1.100"/>
<path d="M343.320 260.670A42.400 42.400 0 0 1 420.550 231.790" fill="none" stroke="#0a0a0a" stroke-width="6.600"/><path d="M426.600 236.800A45.600 45.600 0 0 1 426.600 272.500L417.800 261.500L418.400 240.700z" fill="#0a0a0a"/><path d="M341.600 268.100A45.600 45.600 0 0 0 381.400 300.900Q387 301.500 391.500 301.600L398.100 307.600L401.400 306L402.500 298.300Q409 296 413.400 292.800Q419.500 288 421.500 282Q423.500 275 420 269.800Q417 266.500 411 265.800Q401 265.500 390.400 270.900L382.500 265Q379.500 264 377.500 267Q377 271 379.500 273.500L382.100 276.400Q378 278 373.900 278Q366 278.500 359 274.500Q353.500 271 350.900 267z" fill="#0a0a0a"/><path d="M390.400 257.700Q401 256.500 409.500 262Q418 268 422 277.500Q424.500 288 415.600 299.400Q411 305 404.700 308.700" fill="none" stroke="#0a0a0a" stroke-width="2.100"/>
<path d="M395.900 372.600l3 3.300l5-6.800" fill="none" stroke="#222" stroke-width="1.700"/>
<path d="M458.800 410.100l3 3.300l5-6.800" fill="none" stroke="#222" stroke-width="1.700"/>
<g transform="translate(443.400 341)"><path d="M5.700 13.500V2.300a1.500 1.500 0 0 1 3 0v8.200v-2.500a1.500 1.500 0 0 1 3 0v3v-1.800a1.500 1.500 0 0 1 3 0v2.300v-1a1.400 1.400 0 0 1 2.800 0v6.500q0 5-4.500 6.500h-5.500q-2.500-.5-4-3.500l-3-5.500q-.8-1.800 .5-2.300q1.500-.5 2.700 1.300z" fill="#fff" stroke="#111" stroke-width="1.100" stroke-linejoin="round"/></g>
<g>
<path fill-rule="evenodd" fill="#ececee" d="M1447 287.500a66 30.700 0 1 0 132 0a66 30.700 0 1 0-132 0zM1463.500 287a49.500 21.500 0 1 0 99 0a49.500 21.500 0 1 0-99 0z"/>
<ellipse cx="1513" cy="287.500" rx="66" ry="30.700" fill="none" stroke="#d2d2d5" stroke-width=".8" stroke-dasharray="1.500 1.500"/>
<ellipse cx="1513" cy="287" rx="49.500" ry="21.500" fill="none" stroke="#d6d6d9" stroke-width=".8" stroke-dasharray="1.500 1.500"/>
<path d="M1478 280l30 17l40-14l6 4l-44 16l-34-18z" fill="#e1e1e3"/>
<path d="M1479.300 231L1518.400 223.700L1546.700 235L1507.600 244.500z" fill="#f0f0f1" stroke="#8a8a8d" stroke-width=".9"/>
<path d="M1479.300 231L1507.600 244.500L1507.600 293L1481.500 276.800z" fill="#e6e6e8" stroke="#8a8a8d" stroke-width=".9"/>
<path d="M1507.600 244.500L1546.700 235L1545.300 280.900L1507.600 293z" fill="#ececee" stroke="#8a8a8d" stroke-width=".9"/>
</g>
<path d="M1461 297h12M1462 300h12M1463 303h10" stroke="#c2c2c6" stroke-width="1.200" stroke-dasharray="2 1"/>
<path d="M1551 304h12M1552 307h12M1553 310h10" stroke="#c2c2c6" stroke-width="1.200" stroke-dasharray="2 1"/>
<path d="M1556 265h12M1557 268h12M1558 271h10" stroke="#c2c2c6" stroke-width="1.200" stroke-dasharray="2 1"/>
<path d="M1475 260h12M1476 263h12M1477 266h10" stroke="#c2c2c6" stroke-width="1.200" stroke-dasharray="2 1"/>
<circle cx="1594.800" cy="344.300" r="3" fill="#d9d9db" stroke="#aaa" stroke-width=".8"/><circle cx="1594.800" cy="447.500" r="3" fill="#d9d9db" stroke="#aaa" stroke-width=".8"/>
<path d="M1574.500 369.500a10.500 10.500 0 0 1 10.500-10.500h6.500a4 4 0 0 1 4 4v6.500a10.500 10.500 0 0 1-21 0z" fill="#ededee" stroke="#8f8f93" stroke-width="1.200"/><circle cx="1585" cy="369.500" r="6" fill="#f8f8f8" stroke="#8f8f93" stroke-width="1.200"/><path d="M1577 376.500q8 5 16 0" fill="none" stroke="#8f8f93"/>
<path d="M1582 388h6l-3 3.500zM1582 430h6l-3 3.500z" fill="#8a8a8e"/><path d="M1571 395.500h27" stroke="#c4c4c8" stroke-width="1"/>
<rect x="1577" y="404" width="10.500" height="10.500" fill="#a8cf9e" stroke="#8cb383" stroke-width=".8"/><circle cx="1588.500" cy="413.500" r="3.300" fill="#f4f4f4" stroke="#777" stroke-width="1.100"/><path d="M1590.800 416l2.700 3" stroke="#666" stroke-width="1.600"/>
<rect x="1630.200" y="170" width="8.600" height="8.600" rx="1" fill="#fdfdfd" stroke="#9a9aa2" stroke-width="1"/><path d="M1632.200 174.300h4.600" stroke="#3a4a9a" stroke-width="1.100"/>
<path d="M1639.500 174.300H1646" stroke="#9a9aa0" stroke-width="1" stroke-dasharray="1 1.500"/>
<g fill="none" stroke="#333" stroke-width="1.300"><path d="M1647.500 171v-3.500h3.500M1657 167.500h3.500v3.500M1660.500 177.500v3.500h-3.500M1651 181h-3.500v-3.500"/><path d="M1650.500 171.500l1.500-1.500h5v6l-1.500 1.500h-5z" stroke-width="1.100"/></g>
<rect x="1650.200" y="190" width="8.600" height="8.600" rx="1" fill="#fdfdfd" stroke="#9a9aa2" stroke-width="1"/><path d="M1652.200 194.300h4.600" stroke="#3a4a9a" stroke-width="1.100"/>
<path d="M1659.500 194.300H1669" stroke="#9a9aa0" stroke-width="1" stroke-dasharray="1 1.500"/>
<path d="M1675 214.300H1685.500" stroke="#9a9aa0" stroke-width="1" stroke-dasharray="1 1.500"/>
<rect x="1686.500" y="207.300" width="14" height="14" fill="#fcfcfd" stroke="#555" stroke-width="1" stroke-dasharray="2.500 1"/><rect x="1688.800" y="209.600" width="9.500" height="9.500" fill="#f3f1f8" stroke="#77777c" stroke-width="1"/>
<path d="M1675 234.300H1685.500" stroke="#9a9aa0" stroke-width="1" stroke-dasharray="1 1.500"/>
<rect x="1686.500" y="227.300" width="14" height="14" fill="#fcfcfd" stroke="#555" stroke-width="1" stroke-dasharray="2.500 1"/><rect x="1688.800" y="229.600" width="9.500" height="9.500" fill="#f3f1f8" stroke="#77777c" stroke-width="1"/>
<rect x="1650.200" y="250" width="8.600" height="8.600" rx="1" fill="#fdfdfd" stroke="#9a9aa2" stroke-width="1"/><path d="M1652.200 254.300h4.600" stroke="#3a4a9a" stroke-width="1.100"/>
<path d="M1659.500 254.300H1669" stroke="#9a9aa0" stroke-width="1" stroke-dasharray="1 1.500"/>
<path d="M1675 274.300H1685.500" stroke="#9a9aa0" stroke-width="1" stroke-dasharray="1 1.500"/>
<rect x="1686.500" y="267.300" width="14" height="14" fill="#fcfcfd" stroke="#555" stroke-width="1" stroke-dasharray="2.500 1"/><rect x="1688.800" y="269.600" width="9.500" height="9.500" fill="#f3f1f8" stroke="#77777c" stroke-width="1"/>
<path d="M1675 294.300H1685.500" stroke="#9a9aa0" stroke-width="1" stroke-dasharray="1 1.500"/>
<rect x="1686.500" y="287.300" width="14" height="14" fill="#fcfcfd" stroke="#555" stroke-width="1" stroke-dasharray="2.500 1"/><rect x="1688.800" y="289.600" width="9.500" height="9.500" fill="#f3f1f8" stroke="#77777c" stroke-width="1"/>
<rect x="1650.200" y="310" width="8.600" height="8.600" rx="1" fill="#fdfdfd" stroke="#9a9aa2" stroke-width="1"/><path d="M1652.200 314.300h4.600" stroke="#3a4a9a" stroke-width="1.100"/>
<path d="M1659.500 314.300H1669" stroke="#9a9aa0" stroke-width="1" stroke-dasharray="1 1.500"/>
<path d="M1675 334.300H1685.500" stroke="#9a9aa0" stroke-width="1" stroke-dasharray="1 1.500"/>
<rect x="1686.500" y="327.300" width="14" height="14" fill="#fcfcfd" stroke="#555" stroke-width="1" stroke-dasharray="2.500 1"/><rect x="1688.800" y="329.600" width="9.500" height="9.500" fill="#f3f1f8" stroke="#77777c" stroke-width="1"/>
<path d="M1675 354.300H1685.500" stroke="#9a9aa0" stroke-width="1" stroke-dasharray="1 1.500"/>
<rect x="1686.500" y="347.300" width="14" height="14" fill="#fcfcfd" stroke="#555" stroke-width="1" stroke-dasharray="2.500 1"/><rect x="1688.800" y="349.600" width="9.500" height="9.500" fill="#f3f1f8" stroke="#77777c" stroke-width="1"/>
<rect x="1650.200" y="370" width="8.600" height="8.600" rx="1" fill="#fdfdfd" stroke="#9a9aa2" stroke-width="1"/><path d="M1652.200 374.300h4.600" stroke="#3a4a9a" stroke-width="1.100"/>
<path d="M1659.500 374.300H1669" stroke="#9a9aa0" stroke-width="1" stroke-dasharray="1 1.500"/>
<path d="M1675 394.300H1685.500" stroke="#9a9aa0" stroke-width="1" stroke-dasharray="1 1.500"/>
<rect x="1686.500" y="387.300" width="14" height="14" fill="#fcfcfd" stroke="#555" stroke-width="1" stroke-dasharray="2.500 1"/><rect x="1688.800" y="389.600" width="9.500" height="9.500" fill="#f3f1f8" stroke="#77777c" stroke-width="1"/>
<path d="M1675 414.300H1685.500" stroke="#9a9aa0" stroke-width="1" stroke-dasharray="1 1.500"/>
<rect x="1686.500" y="407.300" width="14" height="14" fill="#fcfcfd" stroke="#555" stroke-width="1" stroke-dasharray="2.500 1"/><rect x="1688.800" y="409.600" width="9.500" height="9.500" fill="#f3f1f8" stroke="#77777c" stroke-width="1"/>
<path d="M1675 434.300H1685.500" stroke="#9a9aa0" stroke-width="1" stroke-dasharray="1 1.500"/>
<rect x="1686.500" y="427.300" width="14" height="14" fill="#fcfcfd" stroke="#555" stroke-width="1" stroke-dasharray="2.500 1"/><rect x="1688.800" y="429.600" width="9.500" height="9.500" fill="#f3f1f8" stroke="#77777c" stroke-width="1"/>
<path d="M1675 454.300H1685.500" stroke="#9a9aa0" stroke-width="1" stroke-dasharray="1 1.500"/>
<rect x="1686.500" y="447.300" width="14" height="14" fill="#fcfcfd" stroke="#555" stroke-width="1" stroke-dasharray="2.500 1"/><rect x="1688.800" y="449.600" width="9.500" height="9.500" fill="#f3f1f8" stroke="#77777c" stroke-width="1"/>
<rect x="1650.200" y="470" width="8.600" height="8.600" rx="1" fill="#fdfdfd" stroke="#9a9aa2" stroke-width="1"/><path d="M1652.200 474.300h4.600" stroke="#3a4a9a" stroke-width="1.100"/>
<path d="M1659.500 474.300H1669" stroke="#9a9aa0" stroke-width="1" stroke-dasharray="1 1.500"/>
<path d="M1675 494.300H1685.500" stroke="#9a9aa0" stroke-width="1" stroke-dasharray="1 1.500"/>
<rect x="1686.500" y="487.300" width="14" height="14" fill="#fcfcfd" stroke="#555" stroke-width="1" stroke-dasharray="2.500 1"/><rect x="1688.800" y="489.600" width="9.500" height="9.500" fill="#4da0ea" stroke="#3a7fc4" stroke-width=".8"/><path d="M1691 493.300h5M1691 495.800h4" stroke="#9ccbf5" stroke-width=".9"/>
<path d="M1675 514.300H1685.500" stroke="#9a9aa0" stroke-width="1" stroke-dasharray="1 1.500"/>
<rect x="1686.500" y="507.300" width="14" height="14" fill="#fcfcfd" stroke="#555" stroke-width="1" stroke-dasharray="2.500 1"/><rect x="1688.800" y="509.600" width="9.500" height="9.500" fill="#4da0ea" stroke="#3a7fc4" stroke-width=".8"/><path d="M1691 513.300h5M1691 515.800h4" stroke="#9ccbf5" stroke-width=".9"/>
<path d="M1675 534.300H1685.500" stroke="#9a9aa0" stroke-width="1" stroke-dasharray="1 1.500"/>
<rect x="1686.500" y="527.300" width="14" height="14" fill="#fcfcfd" stroke="#555" stroke-width="1" stroke-dasharray="2.500 1"/><rect x="1688.800" y="529.600" width="9.500" height="9.500" fill="#4da0ea" stroke="#3a7fc4" stroke-width=".8"/><path d="M1691 533.300h5M1691 535.800h4" stroke="#9ccbf5" stroke-width=".9"/>
<path d="M1675 554.300H1685.500" stroke="#9a9aa0" stroke-width="1" stroke-dasharray="1 1.500"/>
<rect x="1686.500" y="547.300" width="14" height="14" fill="#fcfcfd" stroke="#555" stroke-width="1" stroke-dasharray="2.500 1"/><rect x="1688.800" y="549.600" width="9.500" height="9.500" fill="#f3f1f8" stroke="#77777c" stroke-width="1"/>
<rect x="1630.200" y="570" width="8.600" height="8.600" rx="1" fill="#fdfdfd" stroke="#9a9aa2" stroke-width="1"/><path d="M1632.200 574.300h4.600" stroke="#3a4a9a" stroke-width="1.100"/><path d="M1634.500 572v4.600" stroke="#3a4a9a" stroke-width="1.100"/>
<path d="M1639.500 574.300H1646" stroke="#9a9aa0" stroke-width="1" stroke-dasharray="1 1.500"/>
<rect x="1647" y="567.800" width="14" height="13" rx="1" fill="#f4f4f6" stroke="#444" stroke-width="1.100"/><path d="M1647 569.800h14" stroke="#444" stroke-width="2"/><rect x="1649.500" y="572.800" width="3" height="2.500" fill="#555"/><rect x="1649.500" y="576.800" width="3" height="2.500" fill="#555"/><path d="M1654 574h5M1654 578h5" stroke="#777" stroke-width="1"/>
<rect x="1630.200" y="590" width="8.600" height="8.600" rx="1" fill="#fdfdfd" stroke="#9a9aa2" stroke-width="1"/><path d="M1632.200 594.300h4.600" stroke="#3a4a9a" stroke-width="1.100"/><path d="M1634.500 592v4.600" stroke="#3a4a9a" stroke-width="1.100"/>
<path d="M1639.500 594.300H1646" stroke="#9a9aa0" stroke-width="1" stroke-dasharray="1 1.500"/>
<rect x="1647" y="588.800" width="14" height="11.500" fill="#f4f4f6" stroke="#444" stroke-width="1.100"/><path d="M1647 591.800h14M1647 594.800h14M1647 597.600h14M1651.500 591.300v9" stroke="#666" stroke-width="1"/><path d="M1647.500 590.300h13" stroke="#c9a2a2" stroke-width="1.500"/>
<rect x="1630.200" y="610" width="8.600" height="8.600" rx="1" fill="#fdfdfd" stroke="#9a9aa2" stroke-width="1"/><path d="M1632.200 614.300h4.600" stroke="#3a4a9a" stroke-width="1.100"/><path d="M1634.500 612v4.600" stroke="#3a4a9a" stroke-width="1.100"/>
<path d="M1639.500 614.300H1646" stroke="#9a9aa0" stroke-width="1" stroke-dasharray="1 1.500"/>
<path d="M1647 608.300h10.500l3.500 3.500v8.500h-14z" fill="#f4f4f6" stroke="#444" stroke-width="1.100"/><path d="M1649.500 618.300v-4h5v4M1652 618.300v-2.500h6v2.500" fill="none" stroke="#555" stroke-width="1"/>
<rect x="1630.200" y="630" width="8.600" height="8.600" rx="1" fill="#fdfdfd" stroke="#9a9aa2" stroke-width="1"/><path d="M1632.200 634.300h4.600" stroke="#3a4a9a" stroke-width="1.100"/>
<path d="M1639.500 634.300H1646" stroke="#9a9aa0" stroke-width="1" stroke-dasharray="1 1.500"/>
<path d="M1648 627.800h5.500v5.500h-5.500zM1655 627.800h5.500v12.500h-12.500v-5.500h7z" fill="#fafafa" stroke="#444" stroke-width="1.100"/>
<rect x="1650.200" y="650" width="8.600" height="8.600" rx="1" fill="#fdfdfd" stroke="#9a9aa2" stroke-width="1"/><path d="M1652.200 654.300h4.600" stroke="#3a4a9a" stroke-width="1.100"/><path d="M1654.500 652v4.600" stroke="#3a4a9a" stroke-width="1.100"/>
<path d="M1659.500 654.300H1669" stroke="#9a9aa0" stroke-width="1" stroke-dasharray="1 1.500"/>
<rect x="1650.200" y="670" width="8.600" height="8.600" rx="1" fill="#fdfdfd" stroke="#9a9aa2" stroke-width="1"/><path d="M1652.200 674.300h4.600" stroke="#3a4a9a" stroke-width="1.100"/><path d="M1654.500 672v4.600" stroke="#3a4a9a" stroke-width="1.100"/>
<path d="M1659.500 674.300H1669" stroke="#9a9aa0" stroke-width="1" stroke-dasharray="1 1.500"/>
<rect x="1650.200" y="690" width="8.600" height="8.600" rx="1" fill="#fdfdfd" stroke="#9a9aa2" stroke-width="1"/><path d="M1652.200 694.300h4.600" stroke="#3a4a9a" stroke-width="1.100"/><path d="M1654.500 692v4.600" stroke="#3a4a9a" stroke-width="1.100"/>
<path d="M1659.500 694.300H1669" stroke="#9a9aa0" stroke-width="1" stroke-dasharray="1 1.500"/>
<rect x="1650.200" y="710" width="8.600" height="8.600" rx="1" fill="#fdfdfd" stroke="#9a9aa2" stroke-width="1"/><path d="M1652.200 714.300h4.600" stroke="#3a4a9a" stroke-width="1.100"/><path d="M1654.500 712v4.600" stroke="#3a4a9a" stroke-width="1.100"/>
<path d="M1659.500 714.300H1669" stroke="#9a9aa0" stroke-width="1" stroke-dasharray="1 1.500"/>
<rect x="1650.200" y="730" width="8.600" height="8.600" rx="1" fill="#fdfdfd" stroke="#9a9aa2" stroke-width="1"/><path d="M1652.200 734.300h4.600" stroke="#3a4a9a" stroke-width="1.100"/><path d="M1654.500 732v4.600" stroke="#3a4a9a" stroke-width="1.100"/>
<path d="M1659.500 734.300H1669" stroke="#9a9aa0" stroke-width="1" stroke-dasharray="1 1.500"/>
<rect x="1650.200" y="750" width="8.600" height="8.600" rx="1" fill="#fdfdfd" stroke="#9a9aa2" stroke-width="1"/><path d="M1652.200 754.300h4.600" stroke="#3a4a9a" stroke-width="1.100"/><path d="M1654.500 752v4.600" stroke="#3a4a9a" stroke-width="1.100"/>
<path d="M1659.500 754.300H1669" stroke="#9a9aa0" stroke-width="1" stroke-dasharray="1 1.500"/>
<rect x="1650.200" y="770" width="8.600" height="8.600" rx="1" fill="#fdfdfd" stroke="#9a9aa2" stroke-width="1"/><path d="M1652.200 774.300h4.600" stroke="#3a4a9a" stroke-width="1.100"/><path d="M1654.500 772v4.600" stroke="#3a4a9a" stroke-width="1.100"/>
<path d="M1659.500 774.300H1669" stroke="#9a9aa0" stroke-width="1" stroke-dasharray="1 1.500"/>
<rect x="1650.200" y="790" width="8.600" height="8.600" rx="1" fill="#fdfdfd" stroke="#9a9aa2" stroke-width="1"/><path d="M1652.200 794.300h4.600" stroke="#3a4a9a" stroke-width="1.100"/><path d="M1654.500 792v4.600" stroke="#3a4a9a" stroke-width="1.100"/>
<path d="M1659.500 794.300H1669" stroke="#9a9aa0" stroke-width="1" stroke-dasharray="1 1.500"/>
<rect x="1650.200" y="810" width="8.600" height="8.600" rx="1" fill="#fdfdfd" stroke="#9a9aa2" stroke-width="1"/><path d="M1652.200 814.300h4.600" stroke="#3a4a9a" stroke-width="1.100"/><path d="M1654.500 812v4.600" stroke="#3a4a9a" stroke-width="1.100"/>
<path d="M1659.500 814.300H1669" stroke="#9a9aa0" stroke-width="1" stroke-dasharray="1 1.500"/>
<rect x="1650.200" y="830" width="8.600" height="8.600" rx="1" fill="#fdfdfd" stroke="#9a9aa2" stroke-width="1"/><path d="M1652.200 834.300h4.600" stroke="#3a4a9a" stroke-width="1.100"/><path d="M1654.500 832v4.600" stroke="#3a4a9a" stroke-width="1.100"/>
<path d="M1659.500 834.300H1669" stroke="#9a9aa0" stroke-width="1" stroke-dasharray="1 1.500"/>
<rect x="1650.200" y="850" width="8.600" height="8.600" rx="1" fill="#fdfdfd" stroke="#9a9aa2" stroke-width="1"/><path d="M1652.200 854.300h4.600" stroke="#3a4a9a" stroke-width="1.100"/><path d="M1654.500 852v4.600" stroke="#3a4a9a" stroke-width="1.100"/>
<path d="M1659.500 854.300H1669" stroke="#9a9aa0" stroke-width="1" stroke-dasharray="1 1.500"/>
<rect x="1650.200" y="870" width="8.600" height="8.600" rx="1" fill="#fdfdfd" stroke="#9a9aa2" stroke-width="1"/><path d="M1652.200 874.300h4.600" stroke="#3a4a9a" stroke-width="1.100"/><path d="M1654.500 872v4.600" stroke="#3a4a9a" stroke-width="1.100"/>
<path d="M1659.500 874.300H1669" stroke="#9a9aa0" stroke-width="1" stroke-dasharray="1 1.500"/>
<rect x="1650.200" y="890" width="8.600" height="8.600" rx="1" fill="#fdfdfd" stroke="#9a9aa2" stroke-width="1"/><path d="M1652.200 894.300h4.600" stroke="#3a4a9a" stroke-width="1.100"/><path d="M1654.500 892v4.600" stroke="#3a4a9a" stroke-width="1.100"/>
<path d="M1659.500 894.300H1669" stroke="#9a9aa0" stroke-width="1" stroke-dasharray="1 1.500"/>
<rect x="1650.200" y="910" width="8.600" height="8.600" rx="1" fill="#fdfdfd" stroke="#9a9aa2" stroke-width="1"/><path d="M1652.200 914.300h4.600" stroke="#3a4a9a" stroke-width="1.100"/><path d="M1654.500 912v4.600" stroke="#3a4a9a" stroke-width="1.100"/>
<path d="M1659.500 914.300H1669" stroke="#9a9aa0" stroke-width="1" stroke-dasharray="1 1.500"/>
<rect x="1650.200" y="930" width="8.600" height="8.600" rx="1" fill="#fdfdfd" stroke="#9a9aa2" stroke-width="1"/><path d="M1652.200 934.300h4.600" stroke="#3a4a9a" stroke-width="1.100"/><path d="M1654.500 932v4.600" stroke="#3a4a9a" stroke-width="1.100"/>
<path d="M1659.500 934.300H1669" stroke="#9a9aa0" stroke-width="1" stroke-dasharray="1 1.500"/>
<rect x="1650.200" y="950" width="8.600" height="8.600" rx="1" fill="#fdfdfd" stroke="#9a9aa2" stroke-width="1"/><path d="M1652.200 954.300h4.600" stroke="#3a4a9a" stroke-width="1.100"/><path d="M1654.500 952v4.600" stroke="#3a4a9a" stroke-width="1.100"/>
<path d="M1659.500 954.300H1669" stroke="#9a9aa0" stroke-width="1" stroke-dasharray="1 1.500"/>
<rect x="1650.200" y="970" width="8.600" height="8.600" rx="1" fill="#fdfdfd" stroke="#9a9aa2" stroke-width="1"/><path d="M1652.200 974.300h4.600" stroke="#3a4a9a" stroke-width="1.100"/><path d="M1654.500 972v4.600" stroke="#3a4a9a" stroke-width="1.100"/>
<path d="M1659.500 974.300H1669" stroke="#9a9aa0" stroke-width="1" stroke-dasharray="1 1.500"/>
<path d="M1634.500 179.500V629" stroke="#9a9aa0" stroke-width="1" stroke-dasharray="1 1.500"/>
<path d="M1654.500 182V469" stroke="#9a9aa0" stroke-width="1" stroke-dasharray="1 1.500"/>
<path d="M1634.500 639.500V985" stroke="#9a9aa0" stroke-width="1" stroke-dasharray="1 1.500"/>
<path d="M1674.500 200V234.300" stroke="#9a9aa0" stroke-width="1" stroke-dasharray="1 1.500"/>
<path d="M1674.500 260V294.300" stroke="#9a9aa0" stroke-width="1" stroke-dasharray="1 1.500"/>
<path d="M1674.500 320V354.300" stroke="#9a9aa0" stroke-width="1" stroke-dasharray="1 1.500"/>
<path d="M1674.500 380V454.300" stroke="#9a9aa0" stroke-width="1" stroke-dasharray="1 1.500"/>
<path d="M1674.500 480V554.300" stroke="#9a9aa0" stroke-width="1" stroke-dasharray="1 1.500"/>
<path d="M1654.500 639.500V985" stroke="#9a9aa0" stroke-width="1" stroke-dasharray="1 1.500"/>
<rect x="323.500" y="970" width="14.500" height="11.500" fill="#f0f0f2" stroke="#333" stroke-width="1.200"/><path d="M324 972h14" stroke="#333" stroke-width="1.500"/><path d="M326.500 974.500h4v3h-4zM330.500 977.500h4v3h-4zM334.500 974.500h3v3h-3z" fill="#555"/><path d="M345.500 974.500l4-4h10.500v7l-4 4h-10.500z" fill="#bfe0f7" stroke="#1f6fc0" stroke-width="1.200"/><path d="M345.500 974.500h10.500v7M356 974.500l4-4" fill="none" stroke="#1f6fc0" stroke-width="1.100"/><circle cx="371" cy="975" r="3.800" fill="#fbc823" stroke="#d49a10" stroke-width=".8"/><path d="M371 969v1.500M371 979.500v1.500M365 975h1.500M375.500 975h1.500M366.800 970.800l1.100 1.100M374.100 978.100l1.100 1.100M366.800 979.200l1.100-1.100M374.100 971.900l1.100-1.100" stroke="#d49a10" stroke-width="1"/><path d="M373.500 976.500l5.500 5.500M379 976.500l-5.500 5.500" stroke="#d8221f" stroke-width="1.800"/><circle cx="392.500" cy="974.500" r="4.500" fill="#e8f2fc" stroke="#3a7fd0" stroke-width="1.200"/><path d="M387.500 981.500h8" stroke="#555" stroke-width="1.500"/><path d="M395 977l5.500 5.500M400.500 977l-5.500 5.500" stroke="#d8221f" stroke-width="1.800"/><path d="M406 973.500l3 1.500q1 5.500 5 5.500h2q3.500 0 4.500-5.500l1-2h-9.500z" fill="#f2f2f4" stroke="#666" stroke-width="1"/><path d="M413 972v-1.500h3" stroke="#666" fill="none"/><circle cx="419" cy="977" r="2.500" fill="#d8ebfc" stroke="#2f7fd8" stroke-width="1"/><path d="M418 980h2v2h-2z" fill="#2f7fd8"/><path d="M428 979v-6.500h12M431 980.500v-5h7" fill="none" stroke="#2060b0" stroke-width="1.300"/><path d="M426 979h4M433 971h5" stroke="#555" stroke-width="1.200"/><path d="M436.500 975.500l6 6M442.500 975.500l-6 6" stroke="#d8221f" stroke-width="1.800"/><path d="M450 979v-6.500h9M453 980.500v-5h4" fill="none" stroke="#2060b0" stroke-width="1.300"/><path d="M448 979h4" stroke="#555" stroke-width="1.200"/><path d="M454.500 977.500h3" stroke="#d8221f" stroke-width="1.300"/><circle cx="461" cy="975" r="2.800" fill="#d8ebfc" stroke="#2f7fd8" stroke-width="1"/><path d="M460 978.500h2v2.500h-2z" fill="#2f7fd8"/><path d="M469 975.500l6.500-5.500 7 5M470.500 975v6.500h4v-4" fill="#f0f0f2" stroke="#444" stroke-width="1.200"/><rect x="476" y="977" width="7" height="5" fill="#4aa88a" stroke="#2b7a60" stroke-width=".8"/><path d="M477.500 977v-1.500a2 2 0 0 1 4 0v1.500" fill="none" stroke="#2b7a60" stroke-width="1"/><path d="M490 972.500q2 0 3.500 3q1 2.500 3 2.500q2.500 0 3-2l5-3" fill="none" stroke="#555" stroke-width="1"/><ellipse cx="495.500" cy="978" rx="2.800" ry="2.200" fill="#e8f2fc" stroke="#2f7fd8" stroke-width="1"/><ellipse cx="502.500" cy="976.500" rx="2.800" ry="2.200" fill="#e8f2fc" stroke="#2f7fd8" stroke-width="1"/><circle cx="519" cy="975" r="3" fill="#d8ebfc" stroke="#2f7fd8" stroke-width="1.100"/><path d="M518 978.500h2v2.500h-2z" fill="#2f7fd8"/><rect x="533" y="972" width="11.500" height="8.500" fill="none" stroke="#222" stroke-width="1.200" stroke-dasharray="2.500 1.200"/><rect x="541" y="976" width="6.500" height="5.500" fill="#f4f4f4" stroke="#222" stroke-width="1"/><circle cx="544.200" cy="978.800" r="1.300" fill="none" stroke="#222" stroke-width=".8"/><path d="M553 981v-6l4.500-3.500 4.500 3.500v6M556 981v-5M559 981v-5" fill="none" stroke="#555" stroke-width="1.100"/><path d="M553.500 981v-4M557.500 981v-3" stroke="#d8221f" stroke-width="1.200"/><circle cx="565.500" cy="974" r="3.200" fill="#fbc230" stroke="#e09a10" stroke-width=".8"/><path d="M576 975l4-3h8.500v6.500l-4 3h-8.500zM576 975h8.500v6.500M584.500 975l4-3" fill="#e8e8ea" stroke="#555" stroke-width="1.100"/><path d="M578.500 977v3M581.500 977v3" stroke="#777"/><path d="M595 970v12M610.500 970v6" stroke="#333" stroke-width="1.200"/><path d="M595.500 972.500h15" stroke="#333" stroke-width="1" stroke-dasharray="2.500 1.200"/><path d="M596 979.500h6" stroke="#333" stroke-width="1" stroke-dasharray="2 1.200"/><rect x="604.500" y="977.500" width="6.500" height="4.500" fill="#9a9aa0" stroke="#555" stroke-width=".8"/><path d="M606 977.500v-1.200a1.800 1.800 0 0 1 3.600 0v1.200" fill="none" stroke="#555" stroke-width="1"/><path d="M625 972.500l-4 4 4 4M1592 972.500l4 4-4 4" fill="none" stroke="#333" stroke-width="1.600"/>
<g fill="#b5b5ba"><rect x="1617" y="979" width="1.500" height="1.500"/><rect x="1614" y="982" width="1.500" height="1.500"/><rect x="1617" y="982" width="1.500" height="1.500"/><rect x="1611" y="985" width="1.500" height="1.500"/><rect x="1614" y="985" width="1.500" height="1.500"/><rect x="1617" y="985" width="1.500" height="1.500"/></g>
<path d="M1158 999l3.500 3.500 3.500-3.500M1473 999l3.500 3.500 3.500-3.500" fill="none" stroke="#777" stroke-width="1.100"/>
<circle cx="945" cy="997" r="3.500" fill="#9fcf8a" stroke="#3a6a3a" stroke-width=".9"/><circle cx="950.500" cy="1000" r="3" fill="#d8e8fa" stroke="#2050a0" stroke-width=".9"/><path d="M941 1002q0-4 4-4" fill="none" stroke="#2050a0" stroke-width="1.500"/>
<path d="M1181 994.500h9v5h-5l-2.500 2.500v-2.500h-1.500z" fill="#e4e4e6" stroke="#777" stroke-width="1"/>
<rect x="1229.500" y="992.500" width="15.500" height="11" fill="#f4f4f6" stroke="#333" stroke-width="1.200"/><path d="M1229.500 995h15.500" stroke="#333" stroke-width="1.600"/><rect x="1232" y="997.500" width="3" height="2.500" fill="#444"/><path d="M1236.500 998.800h6" stroke="#555"/>
<path d="M1258 1002l6-6 2 2" fill="none" stroke="#c9c9cc" stroke-width="1.200"/>
<g><ellipse cx="1667.500" cy="996.300" rx="3.800" ry="2.900" fill="none" stroke="#e3aa08" stroke-width="1.800"/><ellipse cx="1674.700" cy="996.300" rx="3.800" ry="2.900" fill="none" stroke="#e3aa08" stroke-width="1.800"/><path d="M1669.500 996.500l.3 6 1.800-1.500 1.500 2.500M1669.500 996.500l5 4.500" fill="none" stroke="#222" stroke-width="1.100"/><path d="M1689.500 1001l7-7.500h8l-2.500 2.500h2.500l-5 5.500z" fill="#d4e9fb" stroke="#2f74c0" stroke-width="1.300"/><path d="M1697.500 996l.3 6.500M1697.500 996l5 5.500" stroke="#222" stroke-width="1.100"/><rect x="1716.500" y="992.300" width="8" height="2.500" rx="1" fill="#e86a3a" stroke="#b8401a" stroke-width=".8"/><path d="M1717.500 995h6l1.500 3v4.500h-9v-4.500z" fill="#f6a070" stroke="#c8501a" stroke-width=".9"/><path d="M1716.500 998.500h8" stroke="#fbe0c8" stroke-width="1"/><path d="M1723.500 996l.3 6.500M1723.500 996l5 5.500" stroke="#222" stroke-width="1.100"/><path d="M1742.500 1002.500v-7.500l7-3v10.500" fill="#b9d9f6" stroke="#2f74c0" stroke-width="1.200"/><path d="M1749.500 996l.3 6.500M1749.500 996l5 5.500" stroke="#222" stroke-width="1.100"/><path d="M1771.500 992v8.500M1767 996.300h9M1769.500 993.800l2-2 2 2M1769.500 998.800l2 2 2-2M1769 994.300l-2 2 2 2M1774 994.300l2 2-2 2" fill="none" stroke="#111" stroke-width="1.100"/><path d="M1773.500 996.500l.3 6M1773.500 996.500l5 5" stroke="#222" stroke-width="1.100"/><path d="M1795 1002.500a5.500 6 0 0 1 11 0" fill="none" stroke="#b4b4b8" stroke-width="3" stroke-dasharray="2.500 .8"/><path d="M1816.500 993.500h15l-5.500 6.500v3h-4v-3z" fill="#e4e4e8" stroke="#66666a" stroke-width="1.200"/><path d="M1817.500 994.500h13" stroke="#9a9aa0" stroke-width="1.400"/></g>
</g>
<g id="labels" font-family="'Liberation Sans','Noto Sans CJK SC',sans-serif" font-size="12">
<text x="6" y="15.100" fill="#fff">文件</text>
<g fill="#2e2e2e">
<text x="52" y="15.100">建筑</text>
<text x="96" y="15.100">结构</text>
<text x="140" y="15.100">钢</text>
<text x="172" y="15.100">预制</text>
<text x="216" y="15.100">系统</text>
<text x="260" y="15.100">插入</text>
<text x="304" y="15.100">注释</text>
<text x="348" y="15.100">分析</text>
<text x="392" y="15.100">体量和场地</text>
<text x="472" y="15.100">协作</text>
<text x="516" y="15.100">视图</text>
<text x="560" y="15.100">管理</text>
<text x="604" y="15.100">附加模块</text>
<text x="672.500" y="15.100">dop-小鲶鱼</text>
<text x="757" y="15.100">小鲶鱼族库</text>
<text x="837" y="15.100">小鲶鱼龙骨</text>
<text x="995" y="15.100">修改</text>
<text x="5" y="74.500">特殊</text>
<text x="5" y="91.500">线型</text>
<text x="45" y="74.500">工具箱</text>
<text x="265" y="74.500">影响参数</text>
<text x="319.400" y="74.500">图转模</text>
<text x="370" y="74.500">放置</text>
<text x="370" y="91.500">灯带</text>
<text x="413" y="74.500">修改</text>
<text x="413" y="91.500">材质</text>
<text x="617.430" y="74.500">贴花Box</text>
<text x="678" y="74.500">装饰</text>
<text x="678" y="91.500">面层</text>
<text x="811" y="74.500">幕墙</text>
<text x="811" y="91.500">工坊</text>
<text x="929" y="74.500">房间工具</text>
<text x="992" y="74.500">标注</text>
<text x="1124" y="74.500">标记</text>
<text x="1124" y="91.500">上移</text>
<text x="1173" y="74.500">灯控线</text>
<text x="1230" y="74.500">点位</text>
<text x="1230" y="91.500">标注</text>
<text x="1275" y="74.500">对齐标头</text>
<text x="1340" y="74.500">操作辅助</text>
<text x="1505.300" y="74.500">清理</text>
<text x="1505.300" y="91.500">剖面</text>
<text x="1543.200" y="74.500">清理</text>
<text x="1543.200" y="91.500">垃圾</text>
<text x="1679" y="72.800">信息</text>
<text x="1679" y="89.800">挂载</text>
<text x="121.400" y="40.300">复制视图</text>
<text x="121.400" y="64.300">创建图纸</text>
<text x="121.400" y="88.100">部件</text>
<text x="200.600" y="52.600">立剪3D锁</text>
<text x="200.600" y="76.100">自由视口</text>
<text x="470.200" y="40.300">构件材质刷</text>
<text x="470.200" y="64.300">填色材质刷</text>
<text x="470.200" y="88.100">空材质填充</text>
<text x="561.200" y="52.600">位图收集</text>
<text x="561.200" y="76.100">随机材质</text>
<text x="746" y="40.300">楼板合并</text>
<text x="746" y="64.300">整层开洞</text>
<text x="746" y="88.100">单墙开洞</text>
<text x="868" y="52.600">删除网格</text>
<text x="868" y="76.100">恢复网格</text>
<text x="1049.300" y="40.300">避让清零</text>
<text x="1049.300" y="64.300">尺寸合并</text>
<text x="1049.300" y="88.100">框选合并</text>
<text x="1428.200" y="40.300">面积</text>
<text x="1428.200" y="64.300">损耗</text>
<text x="1428.200" y="88.100">多构件面积</text>
<text x="1611" y="52.600">删除重复</text>
<text x="1611" y="76.100">完全解组</text>
<text x="1460" y="40.300">查询</text>
<text x="26.200" y="110.700">小工具</text>
<text x="157.600" y="110.700">视图栏</text>
<text x="280.300" y="110.700">参数化建模</text>
<text x="369.800" y="110.700">灯光</text>
<text x="523.800" y="110.700">材质</text>
<text x="717.200" y="110.700">饰面层</text>
<text x="841.230" y="110.700">DIY幕墙</text>
<text x="940.800" y="110.700">房间</text>
<text x="1143.300" y="110.700">注释</text>
<text x="1339.700" y="110.700">操作辅助</text>
<text x="1436.200" y="110.700">查询</text>
<text x="1569.200" y="110.700">清理</text>
<text x="1678" y="110.700">数据</text>
</g>
<g fill="#0c0c0c">
<text x="-2.500" y="158.900">属性</text>
<text x="69" y="204.800">三维视图</text>
<text x="1" y="253.900">三维视图: {三维}</text>
<text x="182.500" y="253">编辑类型</text>
<text x="-1" y="277.300">图形</text>
<text x="6" y="296.400">视图比例</text>
<text x="6" y="316.400" fill="#858585">比例值 1:</text>
<text x="6" y="336.400">详细程度</text>
<text x="105.500" y="336.400">中等</text>
<text x="6" y="356.400">零件可见性</text>
<text x="105.500" y="356.400">显示原状态</text>
<text x="6" y="376.400">可见性/图形替换</text>
<text x="139" y="376.700">编辑...</text>
<text x="6" y="396.400">图形显示选项</text>
<text x="139" y="396.700">编辑...</text>
<text x="6" y="416.400">规程</text>
<text x="105.500" y="416.400">建筑</text>
<text x="6" y="436.400">显示隐藏线</text>
<text x="105.500" y="436.400">按规程</text>
<text x="6" y="456.400">默认分析显示样式</text>
<text x="105.500" y="456.400">无</text>
<text x="6" y="476.400">显示栅格</text>
<text x="139" y="476.700">编辑...</text>
<text x="6" y="496.400">日光路径</text>
<text x="-1" y="517.300">范围</text>
<text x="6" y="536.400">裁剪视图</text>
<text x="6" y="556.400">裁剪区域可见</text>
<text x="6" y="576.400">注释裁剪</text>
<text x="6" y="596.400">远剪裁激活</text>
<text x="6" y="616.400" fill="#858585">远剪裁偏移</text>
<text x="6" y="636.400">范围框</text>
<text x="105.500" y="636.400">无</text>
<text x="6" y="656.400">剖面框</text>
<text x="-1" y="677.300">相机</text>
<text x="6" y="696.400">渲染设置</text>
<text x="139" y="696.700">编辑...</text>
<text x="6" y="716.400" fill="#858585">锁定的方向</text>
<text x="6" y="736.400">投影模式</text>
<text x="105.500" y="736.400">正交</text>
<text x="6" y="756.400">视点高度</text>
<text x="6" y="776.400">目标高度</text>
<text x="6" y="796.400" fill="#858585">相机位置</text>
<text x="105.500" y="796.400" fill="#858585">调整</text>
<text x="-1" y="817.300">标识数据</text>
<text x="6" y="836.400">视图样板</text>
<text x="143.340" y="836.700">&lt;无&gt;</text>
<text x="6" y="856.400">视图名称</text>
<text x="105.500" y="856.400">{三维}</text>
<text x="6" y="876.400" fill="#858585">相关性</text>
<text x="105.500" y="876.400" fill="#858585">不相关</text>
<text x="6" y="896.400">图纸上的标题</text>
<text x="6" y="916.400">完成度</text>
<text x="-1" y="937.300">阶段化</text>
<text x="6" y="956.400">阶段过滤器</text>
<text x="105.500" y="956.400">完全显示</text>
<text x="-1" y="977.800" fill="#0563c1">属性帮助</text>
<text x="187.500" y="977.800" fill="#a3a3a3">应用</text>
<text x="271" y="158.800">{三维}</text>
<text x="354.200" y="338.100" font-size="13.600" font-weight="bold" fill="#fff">选择图片</text>
<text x="368.400" y="463.100" font-size="13.600" font-weight="bold" fill="#fff">创建</text>
<text x="303.600" y="365.480" font-size="13">宽</text>
<text x="303.600" y="388.480" font-size="13">高</text>
<text x="254.800" y="415.180" font-size="13">厚</text>
<text x="332.400" y="414.800">简化系数</text>
<text x="315.300" y="438.200">材质</text>
<text x="412.500" y="376.600">锁定比例</text>
<text x="475.100" y="414.800">反相</text>
</g>
<text transform="translate(1486.500 266) skewY(26) scale(0.072 0.1)" font-size="200" fill="#97979c">左</text>
<text transform="translate(1519.500 272.380) skewY(-13.500) scale(0.0903 0.105)" font-size="200" fill="#8f8f94">前</text>
<text transform="translate(1505 239) skewY(-8) scale(0.09 0.06)" font-size="200" fill="#c6c6ca">上</text>
<g fill="#0c0c0c">
<text x="1627.800" y="158.500">项目浏览器 - LOGO.rvt</text>
<text x="1668.300" y="178.500">视图 (全部)</text>
<text x="1672.300" y="198.500">楼层平面</text>
<text x="1672.300" y="258.500">天花板平面</text>
<text x="1672.300" y="318.500">三维视图</text>
<text x="1708" y="338.500" font-weight="bold">{三维}</text>
<text x="1708" y="358.500">轻量化视图</text>
<text x="1672.300" y="378.500">立面 (建筑立面)</text>
<text x="1708" y="398.500">东</text>
<text x="1708" y="418.500">北</text>
<text x="1708" y="438.500">南</text>
<text x="1708" y="458.500">西</text>
<text x="1672.300" y="478.500">绘图视图 (详图)</text>
<text x="1708" y="498.500">A2施工说明一</text>
<text x="1708" y="518.500">A2施工说明三</text>
<text x="1708" y="538.500">A2施工说明二</text>
<text x="1708" y="558.500">材料构造做法表</text>
<text x="1668.300" y="578.500">图例</text>
<text x="1668.300" y="598.500">明细表/数量 (全部)</text>
<text x="1668.300" y="618.500">图纸 (全部)</text>
<text x="1668.300" y="638.500">族</text>
<text x="1672.300" y="658.500">分析链接</text>
<text x="1672.300" y="678.500">坡道</text>
<text x="1672.300" y="698.500">填充图案</text>
<text x="1672.300" y="718.500">墙</text>
<text x="1672.300" y="738.500">天花板</text>
<text x="1672.300" y="758.500">屋顶</text>
<text x="1672.300" y="778.500">幕墙嵌板</text>
<text x="1672.300" y="798.500">幕墙竖梃</text>
<text x="1672.300" y="818.500">幕墙系统</text>
<text x="1672.300" y="838.500">栏杆扶手</text>
<text x="1672.300" y="858.500">楼板</text>
<text x="1672.300" y="878.500">楼梯</text>
<text x="1672.300" y="898.500">注释符号</text>
<text x="1672.300" y="918.500">电缆桥架</text>
<text x="1672.300" y="938.500">窗</text>
<text x="1672.300" y="958.500">管道</text>
<text x="1672.300" y="978.500">管道系统</text>
</g>
<text x="-1" y="1004.100" fill="#222">关联菜单</text>
<text x="1282" y="1005" fill="#8a8a8a">主模型</text>
</g>
</svg>
</body></html>
